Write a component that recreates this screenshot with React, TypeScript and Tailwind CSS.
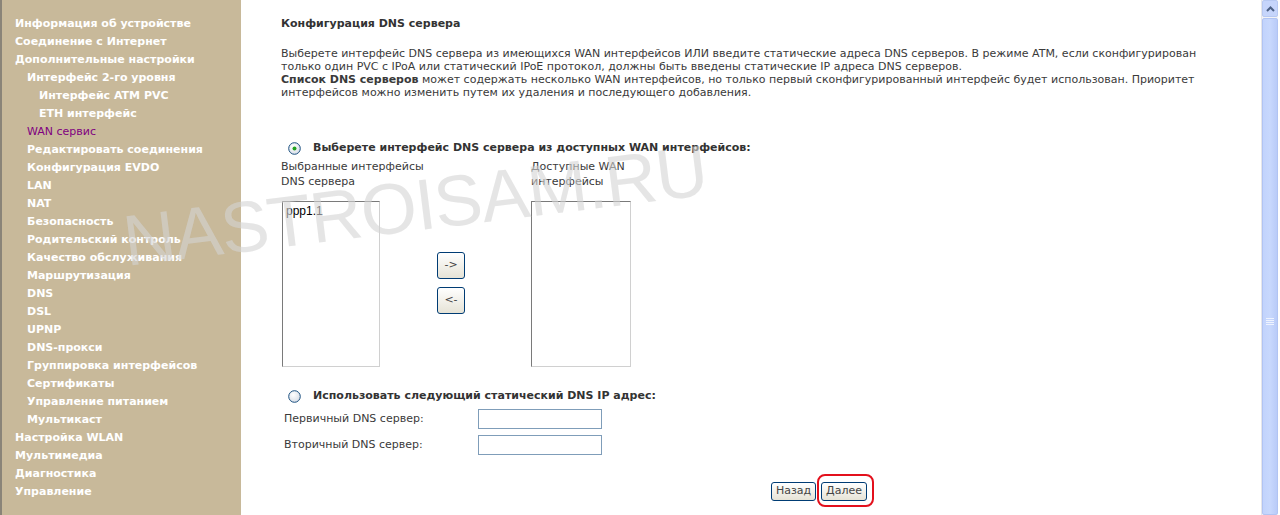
import React from "react";

const menu: [number, string, boolean?][] = [
  [0, "Информация об устройстве"],
  [0, "Соединение с Интернет"],
  [0, "Дополнительные настройки"],
  [1, "Интерфейс 2-го уровня"],
  [2, "Интерфейс ATM PVC"],
  [2, "ETH интерфейс"],
  [1, "WAN сервис", true],
  [1, "Редактировать соединения"],
  [1, "Конфигурация EVDO"],
  [1, "LAN"],
  [1, "NAT"],
  [1, "Безопасность"],
  [1, "Родительский контроль"],
  [1, "Качество обслуживания"],
  [1, "Маршрутизация"],
  [1, "DNS"],
  [1, "DSL"],
  [1, "UPNP"],
  [1, "DNS-прокси"],
  [1, "Группировка интерфейсов"],
  [1, "Сертификаты"],
  [1, "Управление питанием"],
  [1, "Мультикаст"],
  [0, "Настройка WLAN"],
  [0, "Мультимедиа"],
  [0, "Диагностика"],
  [0, "Управление"],
];

const pad = ["pl-[15px]", "pl-[27px]", "pl-[39px]"];

function Radio({ checked }: { checked?: boolean }) {
  return (
    <svg width="13" height="13" viewBox="0 0 13 13" className="shrink-0">
      <defs>
        <radialGradient id={checked ? "rg1" : "rg2"} cx="40%" cy="35%" r="70%">
          <stop offset="0" stopColor="#ffffff" />
          <stop offset="1" stopColor="#d6dce6" />
        </radialGradient>
      </defs>
      <circle cx="6.5" cy="6.5" r="5.8" fill={`url(#${checked ? "rg1" : "rg2"})`} stroke="#1c5180" strokeWidth="1" />
      {checked && <circle cx="6.5" cy="6.5" r="2" fill="#21a121" />}
    </svg>
  );
}

function XpButton({ children, className = "" }: { children: React.ReactNode; className?: string }) {
  return (
    <div
      className={`flex items-center justify-center border border-[#003c74] rounded-[3px] bg-gradient-to-b from-white to-[#e6e3d6] text-[#444] ${className}`}
    >
      {children}
    </div>
  );
}

export default function App() {
  const font = "font-['Tahoma','DejaVu_Sans',sans-serif]";
  return (
    <div className={`relative flex w-[1280px] h-[515px] overflow-hidden bg-white ${font}`}>
      {/* Sidebar */}
      <div className="w-[241px] shrink-0 bg-[#c8b99a] border-l-2 border-[#8a8478] pt-[15px]">
        {menu.map(([lvl, label, active], i) => (
          <div
            key={i}
            className={`h-[18px] leading-[18px] text-[11px] whitespace-nowrap -ml-[2px] ${pad[lvl]} ${
              active ? "text-[#800080] font-normal" : "text-white font-bold"
            }`}
          >
            {label}
          </div>
        ))}
      </div>

      {/* Content */}
      <div className="flex-1 pl-[40px] pt-[16px] text-[11px] text-[#3a3a3a]">
        <div className="font-bold leading-[16px] text-[#333]">Конфигурация DNS сервера</div>
        <div className="mt-[15px] leading-[13px] w-[930px]">
          Выберете интерфейс DNS сервера из имеющихся WAN интерфейсов ИЛИ введите статические адреса DNS серверов. В режиме ATM, если сконфигурирован
          <br />
          только один PVC с IPoA или статический IPoE протокол, должны быть введены статические IP адреса DNS серверов.
          <br />
          <b>Список DNS серверов</b> может содержать несколько WAN интерфейсов, но только первый сконфигурированный интерфейс будет использован. Приоритет
          <br />
          интерфейсов можно изменить путем их удаления и последующего добавления.
        </div>

        <div className="mt-[42px] flex items-center h-[14px] pl-[7px]">
          <Radio checked />
          <span className="ml-[12px] font-bold text-[#333]">Выберете интерфейс DNS сервера из доступных WAN интерфейсов:</span>
        </div>
        <div className="flex mt-[4px] leading-[15px]">
          <div className="w-[250px]">
            Выбранные интерфейсы
            <br />
            DNS сервера
          </div>
          <div>
            Доступные WAN
            <br />
            интерфейсы
          </div>
        </div>
        <div className="flex mt-[12px]">
          <div className="ml-[1px] w-[98px] h-[166px] border border-t-[#7a7a7a] border-l-[#7a7a7a] border-r-[#d0d0d0] border-b-[#d0d0d0] bg-white pl-[3px] pt-[2px] font-['Liberation_Sans',Arial,sans-serif] text-[12px] text-black leading-[15px]">
            ppp1.1
          </div>
          <div className="ml-[57px] mt-[51px] flex flex-col gap-[8px]">
            <XpButton className="w-[28px] h-[27px] text-[11px]">-&gt;</XpButton>
            <XpButton className="w-[28px] h-[27px] text-[11px]">&lt;-</XpButton>
          </div>
          <div className="ml-[66px] w-[100px] h-[166px] border border-t-[#7a7a7a] border-l-[#7a7a7a] border-r-[#d0d0d0] border-b-[#d0d0d0] bg-white" />
        </div>

        <div className="mt-[22px] flex items-center h-[14px] pl-[7px]">
          <Radio />
          <span className="ml-[12px] font-bold text-[#333]">Использовать следующий статический DNS IP адрес:</span>
        </div>
        <div className="mt-[6px] flex items-center h-[20px] pl-[3px]">
          <span className="w-[194px]">Первичный DNS сервер:</span>
          <div className="w-[124px] h-[20px] border border-[#7f9db9] bg-white" />
        </div>
        <div className="mt-[6px] flex items-center h-[20px] pl-[3px]">
          <span className="w-[194px]">Вторичный DNS сервер:</span>
          <div className="w-[124px] h-[20px] border border-[#7f9db9] bg-white" />
        </div>

        <div className="mt-[27px] flex pl-[490px] gap-[5px]">
          <XpButton className="w-[45px] h-[19px] text-[11px]">Назад</XpButton>
          <div className="relative">
            <XpButton className="w-[46px] h-[19px] text-[11px]">Далее</XpButton>
            <div className="absolute -left-[4px] -top-[8px] w-[57px] h-[33px] border-2 border-[#e3101c] rounded-[8px]" />
          </div>
        </div>
      </div>

      {/* Scrollbar */}
      <div className="w-[17px] shrink-0 mr-[2px] flex flex-col bg-[#f3f3f6] border-l border-[#e6e6ea]">
        <div className="h-[17px] flex items-center justify-center border border-[#b8c9f2] rounded-[2px] bg-[#c6d5fb]">
          <svg width="9" height="6" viewBox="0 0 9 6">
            <path d="M1 5 L4.5 1.5 L8 5" fill="none" stroke="#4d6185" strokeWidth="2" />
          </svg>
        </div>
        <div className="flex-1 mt-[1px] border border-[#b1c4f3] rounded-[2px] bg-gradient-to-r from-[#c2d3fc] via-[#c8d8fd] to-[#b9cbf8] flex flex-col items-center pt-[299px]">
          <div className="w-[8px] h-[1px] bg-[#eef3ff] mb-[1px]" />
          <div className="w-[8px] h-[1px] bg-[#eef3ff] mb-[1px]" />
          <div className="w-[8px] h-[1px] bg-[#eef3ff] mb-[1px]" />
          <div className="w-[8px] h-[1px] bg-[#eef3ff]" />
        </div>
      </div>

      {/* Watermark */}
      <div className="pointer-events-none absolute left-[128px] top-[205px] origin-bottom-left -rotate-[7deg] font-['Liberation_Sans',Arial,sans-serif] text-[72px] leading-[72px] text-[rgba(212,212,212,0.6)] tracking-[-1px] whitespace-nowrap">
        NASTROISAM.RU
      </div>
    </div>
  );
}
